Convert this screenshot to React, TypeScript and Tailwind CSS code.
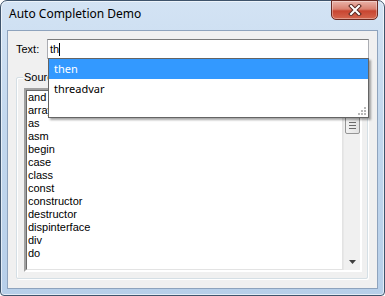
import React from "react";

const words = [
    "and",
    "array",
    "as",
    "asm",
    "begin",
    "case",
    "class",
    "const",
    "constructor",
    "destructor",
    "dispinterface",
    "div",
    "do",
];

const suggestions = ["then", "threadvar"];

const CloseButton: React.FC = () => {
    return (
        <div className="mt-[-1px] w-[47px] h-[20px] rounded-b-[5px] border border-[#6b2a22] bg-[linear-gradient(#e9b3a9,#d98171_45%,#c84531_55%,#d4664f)] flex items-center justify-center shadow-[inset_0_0_0_1px_rgba(255,255,255,0.35)]">
            <svg width="14" height="12" viewBox="0 0 14 12">
                <path
                    d="M3 2 L11 10 M11 2 L3 10"
                    stroke="#5a2a24"
                    strokeWidth="4"
                    strokeLinecap="square"
                />
                <path
                    d="M3 2 L11 10 M11 2 L3 10"
                    stroke="#ffffff"
                    strokeWidth="2"
                    strokeLinecap="square"
                />
            </svg>
        </div>
    );
};

const App: React.FC = () => {
    return (
        <div className="w-[385px] h-[296px] bg-white">
            <div className="w-[385px] h-[296px] rounded-t-[7px] rounded-b-[4px] border border-[#3f546c] bg-[linear-gradient(180deg,#d3e3f4,#c3d8ee_40%,#b7cfe9)] shadow-[inset_0_0_0_1px_rgba(255,255,255,0.6)] flex flex-col">
                <div className="h-[29px] flex justify-between pl-[8px] pr-[6px]">
                    <span className="mt-[5px] text-[12px] leading-[16px] text-black font-['Noto_Sans',sans-serif]">
                        Auto Completion Demo
                    </span>
                    <CloseButton />
                </div>
                <div className="relative mx-[6px] h-[259px] border border-[#8ea3bd] bg-[#f0f0f0] font-['Liberation_Sans',sans-serif] text-[11px] text-black">
                    <div className="flex items-center pt-[8px] pl-[8px] pr-[8px]">
                        <span className="w-[31px] leading-[13px]">Text:</span>
                        <div className="flex-1 h-[20px] border border-[#abadb3] border-t-[#7a7a7a] bg-white flex items-center pl-[2px]">
                            <span className="leading-[13px]">th</span>
                            <span className="w-px h-[13px] bg-black" />
                        </div>
                    </div>

                    <div className="relative mt-[18px] ml-[8px] mr-[9px] h-[202px] border border-[#d5dfe5] shadow-[inset_1px_1px_0_#fff,1px_1px_0_#fff] rounded-[2px] pt-[10px] pl-[7px] pr-[5px] pb-[6px]">
                        <span className="absolute left-[6px] top-[-7px] bg-[#f0f0f0] px-[1px] leading-[13px]">
                            Source
                        </span>
                        <div className="h-full flex border-[2px] border-t-[#a0a0a0] border-l-[#a0a0a0] border-r-[#fff] border-b-[#fff] bg-white">
                            <div className="flex-1 flex flex-col border border-t-[#696969] border-l-[#696969] border-r-[#e3e3e3] border-b-[#e3e3e3] pl-[1px]">
                                {words.map((w) => (
                                    <div key={w} className="leading-[13px]">
                                        {w}
                                    </div>
                                ))}
                            </div>
                            <div className="w-[17px] bg-[#f0f0f0] flex flex-col items-center border-l border-[#e8e8e8]">
                                <div className="h-[17px]" />
                                <div className="w-[15px] h-[27px] rounded-[2px] border border-[#959595] bg-[linear-gradient(90deg,#f2f2f2,#e2e2e2)] flex flex-col items-center justify-end pb-[4px] gap-[2px]">
                                    <span className="w-[7px] h-px bg-[#6a6a6a]" />
                                    <span className="w-[7px] h-px bg-[#6a6a6a]" />
                                    <span className="w-[7px] h-px bg-[#6a6a6a]" />
                                </div>
                                <div className="flex-1" />
                                <div className="h-[17px] flex items-center justify-center">
                                    <svg width="7" height="4" viewBox="0 0 7 4">
                                        <path d="M0 0 H7 L3.5 4 Z" fill="#404040" />
                                    </svg>
                                </div>
                            </div>
                        </div>
                    </div>

                    <div className="absolute left-[40px] top-[27px] w-[321px] h-[60px] bg-white border border-[#646464] shadow-[2px_2px_2px_rgba(0,0,0,0.35)] font-['Noto_Sans',sans-serif] text-[11px]">
                        {suggestions.map((s, i) => (
                            <div
                                key={s}
                                className={
                                    i === 0
                                        ? "h-[20px] pl-[5px] flex items-center bg-[#3399ff] text-white"
                                        : "h-[20px] pl-[5px] flex items-center text-black"
                                }
                            >
                                {s}
                            </div>
                        ))}
                        <svg
                            className="absolute right-[1px] bottom-[1px]"
                            width="10"
                            height="10"
                            viewBox="0 0 10 10"
                        >
                            <g fill="#b8b8b8">
                                <rect x="7" y="1" width="2" height="2" />
                                <rect x="4" y="4" width="2" height="2" />
                                <rect x="7" y="4" width="2" height="2" />
                                <rect x="1" y="7" width="2" height="2" />
                                <rect x="4" y="7" width="2" height="2" />
                                <rect x="7" y="7" width="2" height="2" />
                            </g>
                        </svg>
                    </div>
                </div>
            </div>
        </div>
    );
};

export default App;
